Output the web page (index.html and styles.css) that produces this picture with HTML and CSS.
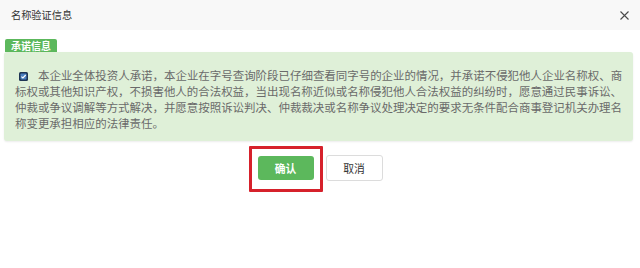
FILE: index.html
```html
<!DOCTYPE html>
<html lang="zh-CN">
<head>
<meta charset="utf-8">
<title>名称验证信息</title>
<link rel="stylesheet" href="styles.css">
</head>
<body>
<div class="dialog">
  <div class="dialog-header">
    <span class="dialog-title">名称验证信息</span>
    <svg class="close-icon" width="9" height="9" viewBox="0 0 9 9"><path d="M0.5 0.5 L8.5 8.5 M8.5 0.5 L0.5 8.5" stroke="#4a4a4a" stroke-width="1.1" fill="none"/></svg>
  </div>
  <div class="dialog-body">
    <div class="badge">承诺信息</div>
    <div class="promise-box">
      <p class="promise-text"><svg class="checkbox" width="9" height="9" viewBox="0 0 9 9"><rect x="0" y="0" width="9" height="9" rx="1.5" fill="#1f3554"/><rect x="1.5" y="1.5" width="6" height="6" rx="0.8" fill="#4a7fc0"/><path d="M2.4 4.6 L3.9 6 L6.7 3" stroke="#ffffff" stroke-width="1.1" fill="none"/></svg>本企业全体投资人承诺，本企业在字号查询阶段已仔细查看同字号的企业的情况，并承诺不侵犯他人企业名称权、商标权或其他知识产权，不损害他人的合法权益，当出现名称近似或名称侵犯他人合法权益的纠纷时，愿意通过民事诉讼、仲裁或争议调解等方式解决，并愿意按照诉讼判决、仲裁裁决或名称争议处理决定的要求无条件配合商事登记机关办理名称变更承担相应的法律责任。</p>
    </div>
  </div>
  <div class="actions">
    <div class="confirm-wrap">
      <button class="btn btn-confirm">确认</button>
      <span class="highlight"></span>
    </div>
    <button class="btn btn-cancel">取消</button>
  </div>
</div>
</body>
</html>
```
FILE: styles.css
```css
html, body {
  margin: 0;
  padding: 0;
  background: #ffffff;
}
body {
  font-family: "Noto Sans CJK SC", "Noto Sans", sans-serif;
  width: 640px;
  height: 268px;
  overflow: hidden;
}
.dialog-header {
  height: 30px;
  background: #f8f8f8;
  display: flex;
  align-items: center;
  justify-content: space-between;
  padding: 0 11px 0 11px;
}
.dialog-title {
  font-size: 10.2px;
  color: #333333;
  line-height: 1;
}
.close-icon {
  display: block;
}
.dialog-body {
  padding: 9px 7px 0 4px;
}
.badge {
  margin-left: 1px;
  width: 52px;
  height: 13px;
  line-height: 13px;
  background: #5cb85c;
  color: #ffffff;
  font-size: 10px;
  font-weight: bold;
  text-align: center;
  border-radius: 2px 2px 0 0;
}
.promise-box {
  background: #dff0d8;
  border-radius: 3px;
  box-shadow: 0 1px 2px rgba(0, 0, 0, 0.08);
  padding: 15px 6px 10px 11px;
}
.promise-text {
  margin: 0;
  font-size: 11.46px;
  line-height: 16px;
  color: #6a6a6a;
  text-align: left;
}
.checkbox {
  display: inline-block;
  vertical-align: -1px;
  margin: 0 10px 0 4px;
}
.actions {
  display: flex;
  justify-content: center;
  align-items: center;
  gap: 12px;
  margin-top: 14px;
}
.confirm-wrap {
  position: relative;
  display: flex;
}
.btn {
  font-family: "Noto Sans CJK SC", "Noto Sans", sans-serif;
  font-size: 10.8px;
  border-radius: 3px;
  padding: 0;
  margin: 0;
  cursor: pointer;
  box-sizing: border-box;
}
.btn-confirm {
  width: 56px;
  height: 24px;
  background: #5cb85c;
  color: #ffffff;
  border: none;
  font-weight: bold;
}
.btn-cancel {
  width: 57px;
  height: 26px;
  background: #ffffff;
  color: #333333;
  border: 1px solid #dcdcdc;
}
.highlight {
  position: absolute;
  left: -9px;
  top: -10px;
  width: 74px;
  height: 46px;
  box-sizing: border-box;
  border: 3px solid #d6212b;
  border-radius: 1px;
}
```
